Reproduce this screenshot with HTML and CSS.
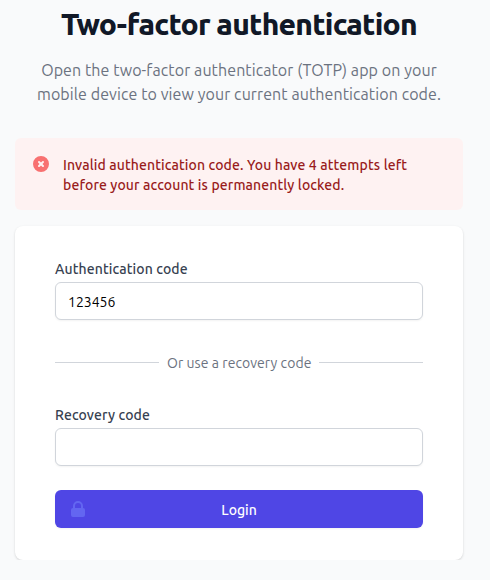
FILE: index.html
```html
<!DOCTYPE html>
<html lang="en">
<head>
<meta charset="utf-8">
<title>Two-factor authentication</title>
<link rel="stylesheet" href="styles.css">
</head>
<body>
<main class="page">
  <header class="intro">
    <h1 class="title">Two-factor authentication</h1>
    <p class="lead">Open the two-factor authenticator (TOTP) app on your<br>mobile device to view your current authentication code.</p>
  </header>
  <div class="alert" role="alert">
    <svg class="icon alert-icon" viewBox="0 0 20 20" fill="currentColor"><path fill-rule="evenodd" d="M10 18a8 8 0 100-16 8 8 0 000 16zM8.707 7.293a1 1 0 00-1.414 1.414L8.586 10l-1.293 1.293a1 1 0 101.414 1.414L10 11.414l1.293 1.293a1 1 0 001.414-1.414L11.414 10l1.293-1.293a1 1 0 00-1.414-1.414L10 8.586 8.707 7.293z" clip-rule="evenodd"/></svg>
    <p class="alert-text">Invalid authentication code. You have 4 attempts left<br>before your account is permanently locked.</p>
  </div>
  <form class="card">
    <label class="label" for="code">Authentication code</label>
    <input class="input" id="code" type="text" value="123456">
    <div class="divider"><span class="divider-text">Or use a recovery code</span></div>
    <label class="label" for="recovery">Recovery code</label>
    <input class="input" id="recovery" type="text">
    <button class="button" type="button">
      <svg class="icon button-icon" viewBox="0 0 20 20" fill="currentColor"><path fill-rule="evenodd" d="M5 9V7a5 5 0 0110 0v2a2 2 0 012 2v5a2 2 0 01-2 2H5a2 2 0 01-2-2v-5a2 2 0 012-2zm8-2v2H7V7a3 3 0 016 0z" clip-rule="evenodd"/></svg>
      <span>Login</span>
    </button>
  </form>
</main>
</body>
</html>
```
FILE: styles.css
```css
* { box-sizing: border-box; margin: 0; }
body {
  background: #f9fafb;
  color: #111827;
  font-family: Ubuntu, "Noto Sans", "Open Sans", sans-serif;
  font-size: 14px;
  line-height: 20px;
  overflow: hidden;
}
.page { width: 448px; margin-left: 15px; padding-top: 6px; white-space: nowrap; }
.intro { height: 132px; text-align: center; }
.title { font-size: 30px; line-height: 36px; font-weight: 800; letter-spacing: -0.025em; }
.lead { margin-top: 16px; font-size: 16px; line-height: 24px; color: #6b7280; letter-spacing: 0.09px; }
.alert { display: flex; gap: 12px; height: 72px; padding: 16px; border-radius: 6px; background: #fef2f2; }
.icon { width: 20px; height: 20px; flex: none; }
.alert-icon { color: #f87171; }
.alert-text { padding-top: 1px; color: #991b1b; font-weight: 500; letter-spacing: 0.12px; }
.card {
  margin-top: 16px;
  height: 334px;
  padding: 33px 40px 32px;
  border-radius: 8px;
  background: #fff;
  box-shadow: 0 1px 3px rgba(0,0,0,.1), 0 1px 2px rgba(0,0,0,.06);
}
.label { display: block; color: #374151; font-weight: 500; letter-spacing: 0.12px; }
.input {
  display: block;
  width: 100%;
  height: 38px;
  margin-top: 3px;
  padding: 9px 12px 7px;
  border: 1px solid #d1d5db;
  border-radius: 6px;
  background: #fff;
  color: #000;
  font: inherit;
  box-shadow: 0 1px 2px rgba(0,0,0,.05);
}
.divider { display: flex; align-items: center; gap: 8px; margin: 33px 0 32px; color: #6b7280; }
.divider::before, .divider::after { content: ""; flex: 1; height: 1px; margin-bottom: 1px; background: #d1d5db; }
.divider-text { width: 144px; letter-spacing: 0.06px; }
.button {
  position: relative;
  display: flex;
  align-items: center;
  justify-content: center;
  width: 100%;
  height: 38px;
  margin-top: 24px;
  padding: 2px 0 0;
  border: 0;
  border-radius: 6px;
  background: #4f46e5;
  color: #fff;
  font: inherit;
  font-weight: 500;
  box-shadow: 0 1px 2px rgba(0,0,0,.05);
}
.button-icon { position: absolute; left: 13px; top: 9px; color: #6366f1; }
```
